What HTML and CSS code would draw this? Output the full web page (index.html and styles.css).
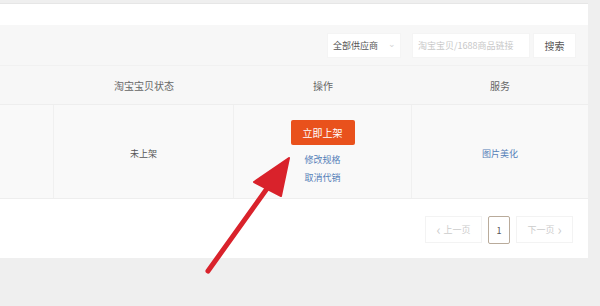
FILE: index.html
```html
<!DOCTYPE html>
<html lang="zh-CN">
<head>
    <meta charset="UTF-8">
    <title>代销商品</title>
    <link rel="stylesheet" href="styles.css">
</head>
<body>

    <div class="panel">
        <div class="panel-top"></div>

        <div class="toolbar">
            <div class="select">全部供应商 <span class="caret">&#8964;</span></div>
            <div class="search-input">淘宝宝贝/1688商品链接</div>
            <div class="search-btn">搜索</div>
        </div>

        <div class="grid thead">
            <div class="cell"></div>
            <div class="cell">淘宝宝贝状态</div>
            <div class="cell">操作</div>
            <div class="cell">服务</div>
        </div>

        <div class="grid trow">
            <div class="cell"></div>
            <div class="cell">未上架</div>
            <div class="cell ops">
                <span class="btn-primary">立即上架</span>
                <a class="link">修改规格</a>
                <a class="link">取消代销</a>
            </div>
            <div class="cell"><a class="link">图片美化</a></div>
        </div>

        <div class="pager">
            <span class="page-btn"><span class="chev">&lsaquo;</span>上一页</span>
            <span class="page-num">1</span>
            <span class="page-btn">下一页<span class="chev">&rsaquo;</span></span>
        </div>
    </div>

    <!-- annotation arrow over the screenshot -->
    <svg class="arrow" width="600" height="306" viewBox="0 0 600 306">
        <line x1="208" y1="271" x2="276" y2="176" stroke="#d9222b" stroke-width="5" stroke-linecap="round"/>
        <polygon points="289,158 254,182 281,196" fill="#d9222b" stroke="#d9222b" stroke-width="2" stroke-linejoin="round"/>
    </svg>

</body>
</html>
```

FILE: styles.css
```css
body {
    margin: 0;
    background: #efefef;
    font-family: "Noto Sans CJK SC", "Liberation Sans", sans-serif;
    font-size: 10px;
    color: #444;
    width: 600px;
    height: 306px;
    overflow: hidden;
    position: relative;
}

.panel {
    width: 588px;
    margin-top: 3px;
    background: #fff;
    border-top: 1px solid #e6e6e6;
}

.panel-top {
    height: 21px;
}

.toolbar {
    height: 40px;
    background: #f7f7f7;
    display: flex;
    justify-content: flex-end;
    align-items: center;
    padding-right: 12px;
}

.select,
.search-input,
.search-btn {
    height: 25px;
    box-sizing: border-box;
    background: #fff;
    border: 1px solid #f4f4f4;
    display: flex;
    align-items: center;
}

.select {
    width: 74px;
    padding-left: 5px;
    color: #555;
    font-size: 9px;
    justify-content: space-between;
    padding-right: 4px;
}

.caret {
    color: #d4d4d4;
    font-size: 9px;
    line-height: 1;
    margin-top: -4px;
}

.search-input {
    width: 118px;
    margin-left: 11px;
    padding-left: 5px;
    color: #c8c8c8;
    font-size: 9px;
}

.search-btn {
    width: 43px;
    margin-left: 3px;
    justify-content: center;
    color: #555;
    font-size: 10px;
}

.grid {
    display: grid;
    grid-template-columns: 54px 180px 178px 176px;
}

.thead {
    height: 38px;
    background: #f7f7f7;
    border-top: 1px solid #f1f1f1;
    color: #666;
    font-size: 10px;
}

.thead .cell {
    display: flex;
    align-items: center;
    justify-content: center;
}

.trow {
    height: 93px;
    background: #f9f9f9;
    border-top: 1px solid #eeeeee;
    border-bottom: 1px solid #eeeeee;
}

.trow .cell {
    display: flex;
    align-items: center;
    justify-content: center;
    border-right: 1px solid #f0f0f0;
    padding-top: 4px;
    color: #555;
    font-size: 9px;
}

.trow .cell:last-child {
    border-right: none;
}

.trow .ops {
    flex-direction: column;
    justify-content: flex-start;
    padding-top: 15px;
    box-sizing: border-box;
}

.btn-primary {
    background: #e9511c;
    color: #fff;
    font-size: 10px;
    width: 64px;
    height: 25px;
    line-height: 25px;
    text-align: center;
    border-radius: 2px;
    margin-bottom: 6px;
}

.link {
    color: #5580b8;
    font-size: 9px;
    line-height: 18px;
}

.pager {
    height: 59px;
    display: flex;
    justify-content: flex-end;
    align-items: flex-start;
    padding-top: 17px;
    padding-right: 15px;
    box-sizing: border-box;
    gap: 6px;
}

.page-btn {
    width: 57px;
    height: 27px;
    box-sizing: border-box;
    border: 1px solid #f3f3f3;
    color: #cccccc;
    font-size: 9px;
    display: flex;
    align-items: center;
    justify-content: center;
    gap: 3px;
}

.chev {
    font-size: 14px;
    line-height: 1;
    margin-top: -2px;
}

.page-num {
    width: 22px;
    height: 28px;
    box-sizing: border-box;
    border: 1px solid #b9ab9b;
    border-radius: 2px;
    color: #555;
    font-size: 9px;
    display: flex;
    align-items: center;
    justify-content: center;
}

.arrow {
    position: absolute;
    left: 0;
    top: 0;
}
```
